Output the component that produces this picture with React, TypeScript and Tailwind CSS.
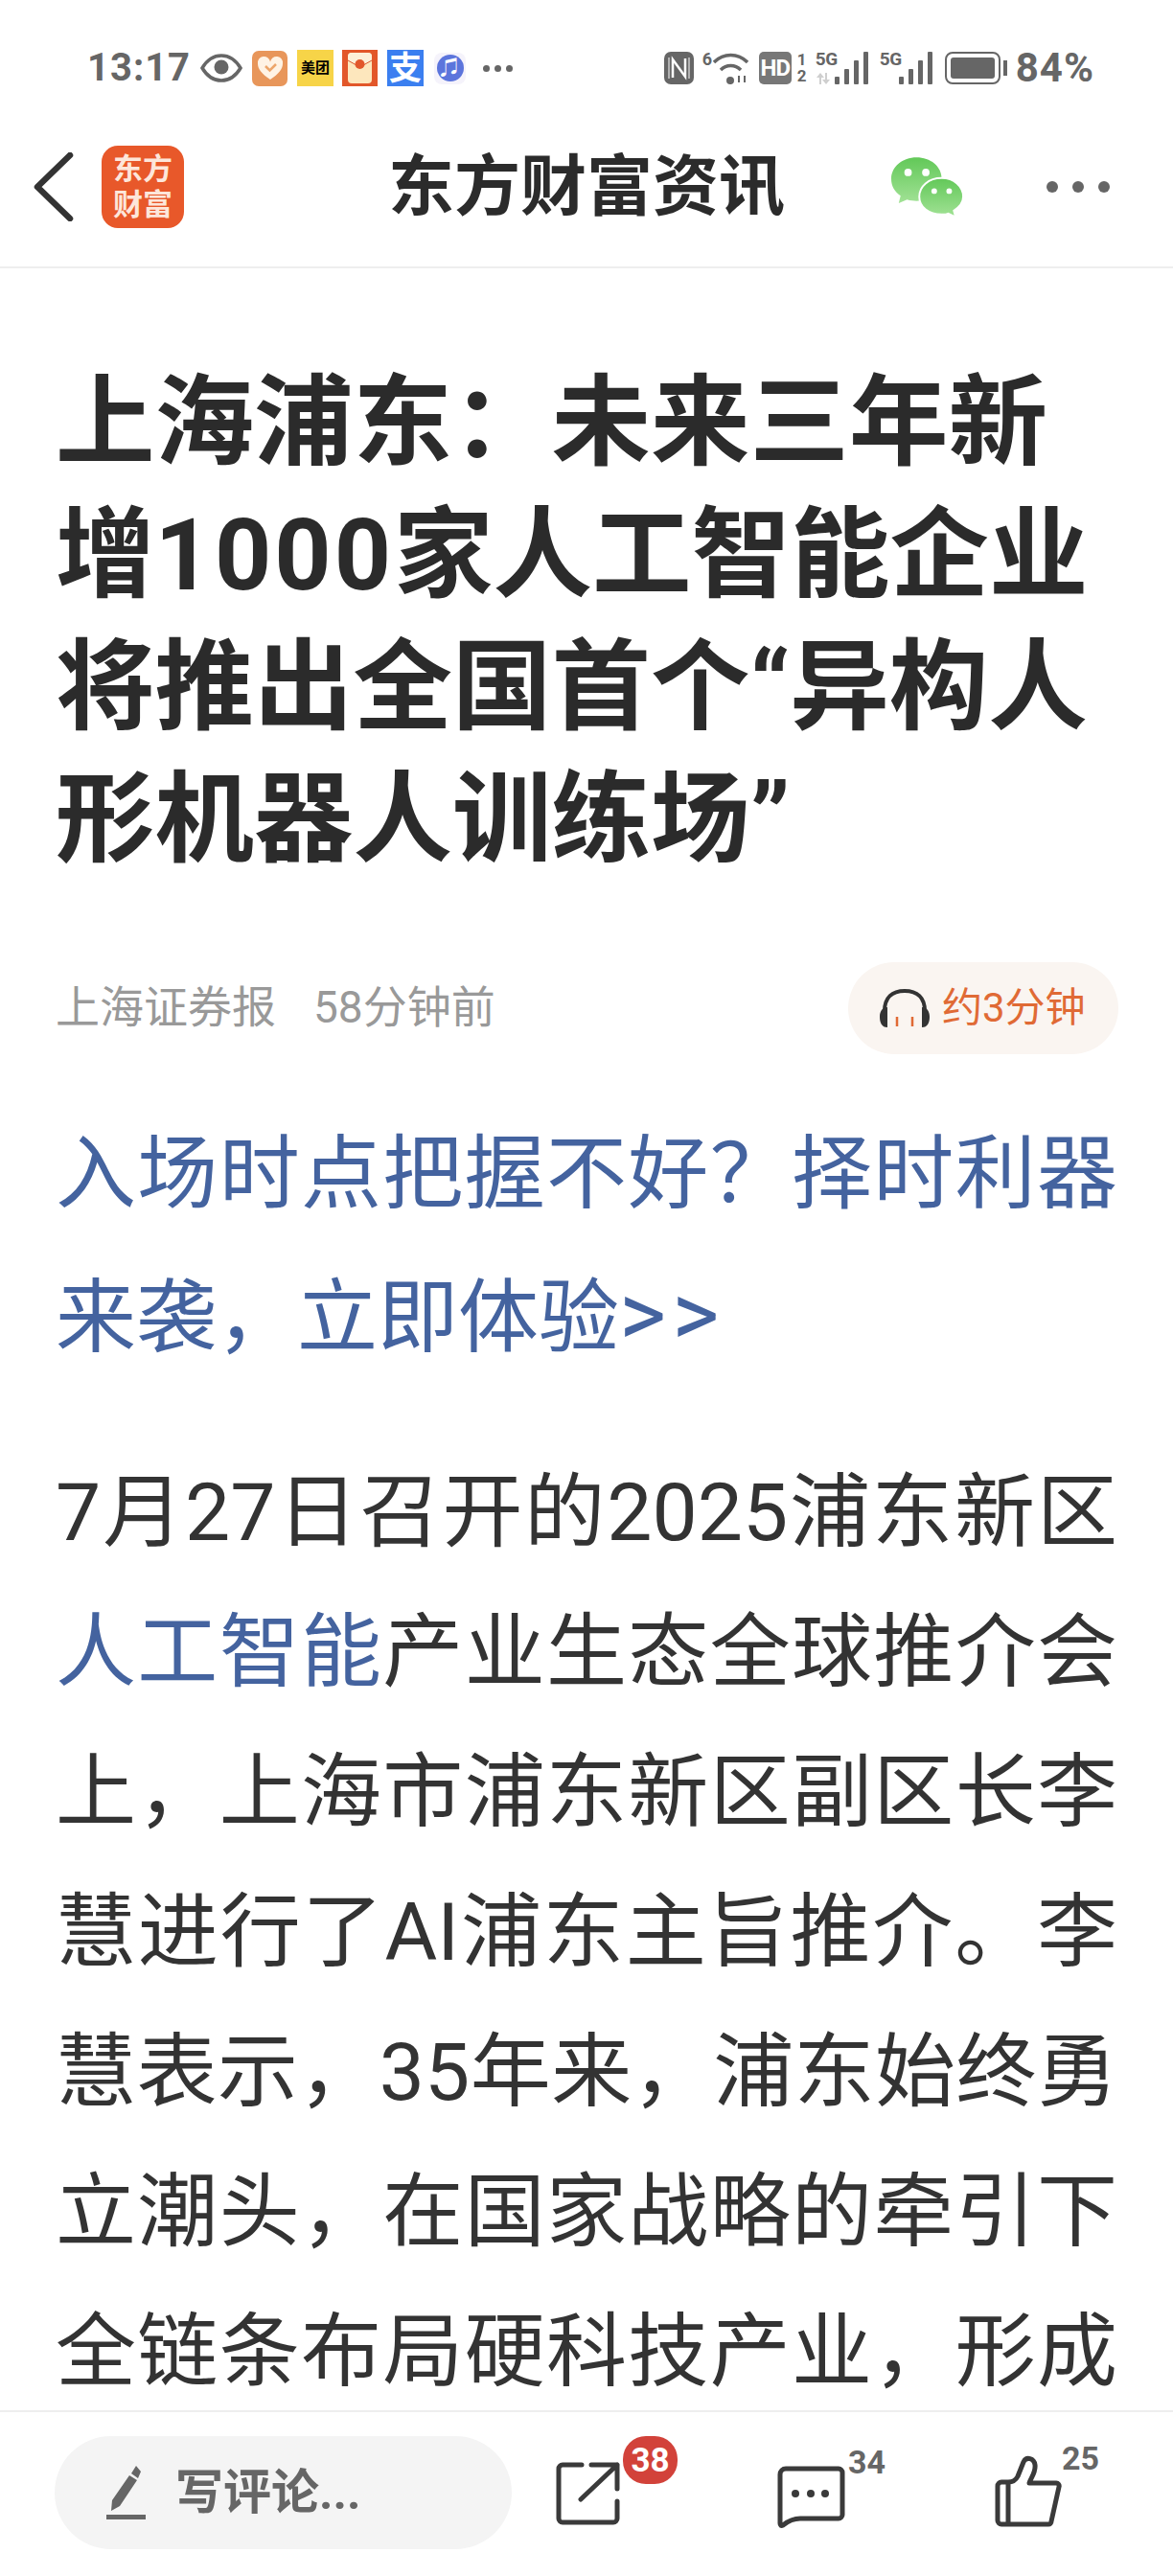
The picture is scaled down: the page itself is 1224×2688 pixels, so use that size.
import React from 'react';

const cjk = { fontFamily: '"Roboto", "Noto Sans CJK SC", sans-serif' };

const Bars = () => (
  <svg width="36" height="34" viewBox="0 0 36 34" fill="#666">
    <rect x="0" y="26" width="5" height="8" rx="1" />
    <rect x="10" y="18" width="5" height="16" rx="1" />
    <rect x="20" y="9" width="5" height="25" rx="1" />
    <rect x="30" y="0" width="5" height="34" rx="1" />
  </svg>
);

// 5G label with the optional grey up/down arrows under it
const Signal = ({ arrows }: { arrows?: boolean }) => (
  <div className="flex items-start">
    <div className="w-[20px] h-[34px] flex flex-col">
      <span className="text-[19px] font-bold leading-[16px] tracking-[-0.5px]">5G</span>
      {arrows && (
        <svg width="16" height="12" viewBox="0 0 16 12" fill="#cfcfcf" className="mt-[6px]">
          <path d="M5 0L1 5h3v7h2V5h3zM11 12l4-5h-3V0h-2v7H7z" />
        </svg>
      )}
    </div>
    <Bars />
  </div>
);

const StatusBar = () => (
  <div className="h-[110px] shrink-0 flex items-center justify-between pl-[91px] pr-[82px] pt-[32px] text-[#666]">
    <div className="flex items-center">
      <span className="text-[40px] font-bold leading-none tracking-[1px] w-[118px]">13:17</span>
      <svg width="44" height="30" viewBox="0 0 44 30" fill="none" className="mr-[10px]">
        <path d="M2 15C8 5 15 2 22 2s14 3 20 13c-6 10-13 13-20 13S8 25 2 15z" stroke="#666" strokeWidth="3.5" />
        <circle cx="22" cy="14" r="7.5" fill="#666" />
      </svg>
      <div className="w-[37px] h-[37px] rounded-[7px] bg-[#e8965a] flex items-center justify-center mr-[10px]">
        <svg width="28" height="26" viewBox="0 0 28 26">
          <path d="M14 25C5 19 1 14 1 8.500a6.500 6.500 0 0 1 13-2 6.500 6.500 0 0 1 13 2C27 14 23 19 14 25z" fill="#fff3e4" />
          <path d="M9 11l4.500 4.500L20 9" stroke="#eda66a" strokeWidth="2.500" fill="none" />
        </svg>
      </div>
      <div className="w-[38px] h-[38px] bg-[#f7d448] flex items-center justify-center text-[15px] font-bold leading-none text-black mr-[9px]">美团</div>
      <div className="w-[37px] h-[38px] bg-[#e2572a] flex items-center justify-center mr-[10px]">
        <svg width="25" height="32" viewBox="0 0 25 32">
          <rect width="25" height="32" rx="4" fill="#fde7bd" />
          <path d="M0 8l12.500 7L25 8V4a4 4 0 0 0-4-4H4a4 4 0 0 0-4 4z" fill="#fdf0d8" />
          <path d="M0 8l12.500 7L25 8" stroke="#d9582c" strokeWidth="1" fill="none" />
          <circle cx="12.500" cy="12" r="5" fill="#e2572a" />
        </svg>
      </div>
      <div className="w-[38px] h-[38px] bg-[#3b7ff0] flex items-center justify-center text-[34px] font-bold leading-none text-white mr-[11px]">支</div>
      <div className="w-[33px] h-[33px] rounded-[8px] bg-[#f5f3fb] flex items-center justify-center mr-[18px]">
        <div className="w-[28px] h-[28px] rounded-full bg-[#5c75dc] flex items-center justify-center text-[20px] leading-none text-white">♫</div>
      </div>
      <div className="flex gap-[5px]">
        <div className="w-[7px] h-[7px] rounded-full bg-[#666]" />
        <div className="w-[7px] h-[7px] rounded-full bg-[#666]" />
        <div className="w-[7px] h-[7px] rounded-full bg-[#666]" />
      </div>
    </div>
    <div className="flex items-center">
      <svg width="31" height="34" viewBox="0 0 31 34" className="mr-[9px]">
        <rect width="31" height="34" rx="7" fill="#666" />
        <path d="M9 27V8l13 18V7" stroke="#fff" strokeWidth="2.500" fill="none" />
        <path d="M5 6v22M26 6v22" stroke="#fff" strokeWidth="1" />
      </svg>
      <div className="relative w-[48px] h-[34px] mr-[11px]">
        <span className="absolute left-0 top-[-1px] text-[18px] font-bold leading-none">6</span>
        <svg width="37" height="34" viewBox="0 0 37 34" fill="none" stroke="#666" strokeWidth="3.500" className="absolute right-0 top-0">
          <path d="M1 11c10-10 25-10 35 0M8 19c6-6 15-6 21 0" />
          <circle cx="18" cy="30" r="4" fill="#666" stroke="none" />
          <path d="M27 32v-7M33 32v-7" strokeWidth="2" />
        </svg>
      </div>
      <div className="w-[34px] h-[34px] rounded-[5px] bg-[#777] flex items-center justify-center text-[24px] font-bold leading-none tracking-[-1px] text-white mr-[6px]">HD</div>
      <div className="flex flex-col text-[17px] font-bold leading-[17px] w-[19px]">
        <span>1</span>
        <span>2</span>
      </div>
      <Signal arrows />
      <div className="ml-[11px]">
        <Signal />
      </div>
      <div className="w-[58px] h-[34px] rounded-[8px] border-[2px] border-[#666] p-[4px] ml-[12px]">
        <div className="w-full h-full rounded-[3px] bg-[#666]" />
      </div>
      <div className="w-[4px] h-[16px] bg-[#666] ml-[3px] mr-[9px]" />
      <span className="text-[42px] font-bold leading-none tracking-[1px]">84%</span>
    </div>
  </div>
);

const Header = () => (
  <div className="relative h-[170px] shrink-0 flex items-center justify-between border-b-[2px] border-[#eeeeee] pl-[35px] pr-[66px] pt-[2px]">
    <div className="flex items-center">
      <svg width="42" height="72" viewBox="0 0 42 72" fill="none" className="mr-[29px]">
        <path d="M38 3L4 36l34 33" stroke="#333" strokeWidth="6.500" strokeLinecap="round" strokeLinejoin="round" />
      </svg>
      <div className="w-[86px] h-[86px] rounded-[17px] bg-[#e8582a] flex flex-col items-center justify-center text-[31px] font-bold leading-[37px] text-[#fde6da]">
        <span>东方</span>
        <span>财富</span>
      </div>
    </div>
    <div className="absolute left-[405px] top-[40px] text-[69px] font-bold leading-[92px] text-[#2b2b2b]">东方财富资讯</div>
    <div className="flex items-center">
      <svg width="78" height="63" viewBox="0 0 80 64" className="mr-[84px]">
        <defs>
          <linearGradient id="wx" x1="0" y1="0" x2="0" y2="1">
            <stop offset="0" stopColor="#62c858" />
            <stop offset="1" stopColor="#a2e296" />
          </linearGradient>
        </defs>
        <path d="M27 0C12 0 0 10 0 23c0 8 4 14 10 18l-2 8 9-4c3 1 7 1.500 10 1.500 15 0 27-10 27-23.500S42 0 27 0z" fill="url(#wx)" />
        <path d="M54 22c-14 0-24 9-24 20s10 19 24 19c2 0 5 0 7-1l8 4-2-7c6-4 10-9 10-15 0-11-10-20-23-20z" fill="url(#wx)" stroke="#fff" strokeWidth="2" />
        <circle cx="18" cy="16" r="4" fill="#fff" />
        <circle cx="37" cy="16" r="4" fill="#fff" />
        <circle cx="46" cy="36" r="3" fill="#fff" />
        <circle cx="62" cy="36" r="3" fill="#fff" />
      </svg>
      <div className="flex gap-[15px]">
        <div className="w-[12px] h-[12px] rounded-full bg-[#666]" />
        <div className="w-[12px] h-[12px] rounded-full bg-[#666]" />
        <div className="w-[12px] h-[12px] rounded-full bg-[#666]" />
      </div>
    </div>
  </div>
);

const Article = () => (
  <div className="flex-1 overflow-hidden pl-[58px] pr-[58px]">
    <h1 className="mt-[93px] text-[103.5px] font-bold leading-[138px] text-[#2b2b2b]">
      上海浦东：未来三年新增<span className="tracking-[3px]">1000</span>家人工智能企业 将推出全国首个“异构人形机器人训练场”
    </h1>
    <div className="mt-[78px] flex items-center justify-between">
      <div className="text-[46px] leading-[96px] text-[#999999] pb-[2px]">
        <span className="mr-[39px]">上海证券报</span>
        <span>58分钟前</span>
      </div>
      <div className="h-[96px] w-[282px] rounded-full bg-[#faf5f1] flex items-center pl-[32px] mr-[-1px]">
        <svg width="54" height="42" viewBox="0 0 54 42" fill="none" className="mr-[12px]">
          <path d="M6 28V24C6 10 14 3 27 3s21 7 21 21v4" stroke="#333" strokeWidth="4" />
          <path d="M9 20v21C3 41 1 36 1 30s3-10 8-10zM45 20v21c6 0 8-5 8-11s-3-10-8-10z" fill="#333" />
          <path d="M19 30v10M35 30v10" stroke="#e06a35" strokeWidth="2.500" />
        </svg>
        <span className="text-[42px] leading-none text-[#e06a35]">约3分钟</span>
      </div>
    </div>
    <p className="mt-[52px] text-[84px] leading-[146px] text-[#44639f] text-justify">
      入场时点把握不好？择时利器来袭，立即体验<span className="text-[94px] tracking-[6px]">&gt;&gt;</span>
    </p>
    <p className="mt-[57px] text-[84px] leading-[146px] text-[#333333] text-justify [text-align-last:justify]">
      7月27日召开的2025浦东新区<span className="text-[#44639f]">人工智能</span>产业生态全球推介会上，上海市浦东新区副区长李慧进行了AI浦东主旨推介。李慧表示，35年来，浦东始终勇立潮头，在国家战略的牵引下全链条布局硬科技产业，形成
    </p>
  </div>
);

const BottomBar = () => (
  <div className="relative h-[173px] shrink-0 border-t-[2px] border-[#eeeeee] bg-white flex items-start pl-[57px] pt-[25px]">
    <div className="w-[477px] h-[118px] rounded-full bg-[#f4f4f4] flex items-center pl-[54px]">
      <svg width="42" height="56" viewBox="0 0 42 56" fill="#666" className="mr-[30px]">
        <path d="M31 0l5 6-3 7-7-5zM24 10l8 5-18 27-9 5 1-11z" />
        <rect x="0" y="51" width="41" height="5" />
      </svg>
      <span className="text-[50px] font-bold leading-none text-[#666]">写评论...</span>
    </div>
    <svg width="67" height="66" viewBox="0 0 67 66" fill="none" stroke="#3a3a3a" strokeWidth="5" strokeLinecap="round" strokeLinejoin="round" className="ml-[46px] mt-[27px]">
      <path d="M27 3H7a4 4 0 0 0-4 4v52a4 4 0 0 0 4 4h53a4 4 0 0 0 4-4V41" />
      <path d="M37 3h27v25M64 3L26 39" />
    </svg>
    <div className="absolute left-[650px] top-[25px] w-[57px] h-[50px] rounded-[24px] bg-[#d2423a] flex items-center justify-center text-[35px] font-bold leading-none text-white">38</div>
    <svg width="71" height="65" viewBox="0 0 71 65" fill="none" stroke="#3a3a3a" strokeWidth="5" strokeLinejoin="round" className="ml-[164px] mt-[31px]">
      <path d="M3 9a6 6 0 0 1 6-6h55a4 4 0 0 1 4 4v44a4 4 0 0 1-4 4H24c-8 0-13 3-18 7-2 1-3 0-3-2z" />
      <circle cx="19" cy="29" r="4" fill="#3a3a3a" stroke="none" />
      <circle cx="35" cy="29" r="4" fill="#3a3a3a" stroke="none" />
      <circle cx="50" cy="29" r="4" fill="#3a3a3a" stroke="none" />
    </svg>
    <span className="w-[38px] text-[34px] font-bold leading-none text-[#666] mt-[10px] ml-[3px]">34</span>
    <svg width="70" height="76" viewBox="0 0 70 76" fill="none" stroke="#3a3a3a" strokeWidth="5" strokeLinejoin="round" className="ml-[115px] mt-[19px]">
      <path d="M14 29H7a4 4 0 0 0-4 4v36a4 4 0 0 0 4 4h49a3 3 0 0 0 3-3l8-36a3 3 0 0 0-3-4H36c2-6 7-11 6-19-1-7-9-9-12-3l-6 15c-2 4-5 6-10 6zM14 29v44" />
    </svg>
    <span className="text-[34px] font-bold leading-none text-[#666] mt-[6px]">25</span>
  </div>
);

export default function App() {
  return (
    <div style={cjk} className="w-[1224px] h-[2688px] bg-white flex flex-col overflow-hidden">
      <StatusBar />
      <Header />
      <Article />
      <BottomBar />
    </div>
  );
}
